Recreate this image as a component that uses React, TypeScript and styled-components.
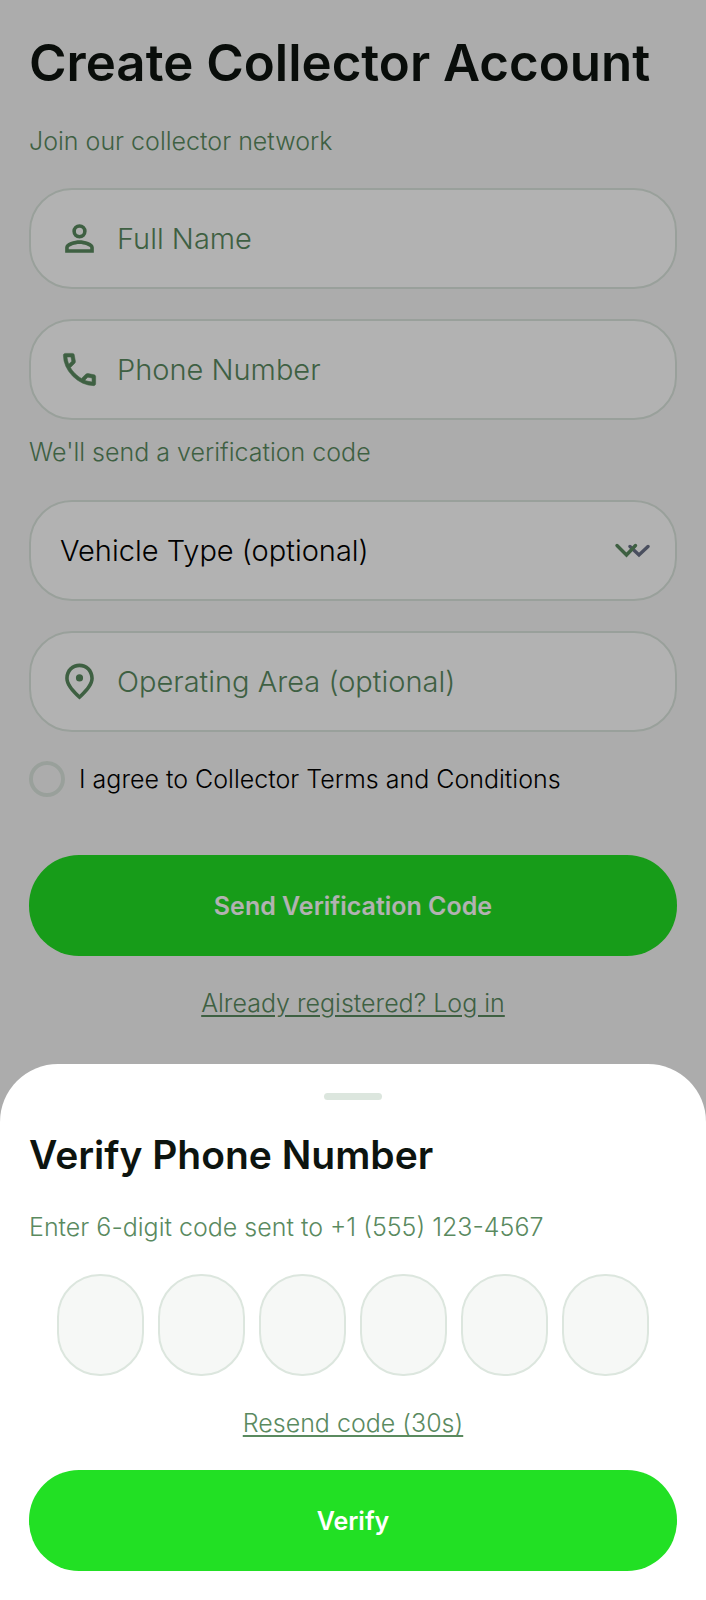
import React, { useState } from "react";
import styled, { createGlobalStyle } from "styled-components";

const color = {
  ink: "#0d140f",
  text: "#000000",
  muted: "#5a8a5f",
  line: "#dce6de",
  page: "#f7f7f7",
  tile: "#f6f8f6",
  brand: "#22e024",
};

const GlobalStyle = createGlobalStyle`
  *, *::before, *::after { box-sizing: border-box; }
  body { margin: 0; background: ${color.page}; }
  body, button, input, select { font-family: Inter, "Liberation Sans", sans-serif; }
`;

const Screen = styled.div`
  display: grid;
  min-height: 100vh;
`;

const Page = styled.main`
  grid-area: 1 / 1;
  padding: 29px;
  background: ${color.page};
`;

const Form = styled.form`
  display: flex;
  flex-direction: column;
`;

const Title = styled.h1`
  margin: 0;
  font-size: 51px;
  line-height: 68px;
  font-weight: 600;
  color: ${color.ink};
`;

const SheetTitle = styled.h2`
  margin: 0;
  font-size: 39px;
  line-height: 52px;
  font-weight: 600;
  color: ${color.ink};
`;

const Note = styled.p<{ $top: number; $bottom: number }>`
  margin: ${(p) => p.$top}px 0 ${(p) => p.$bottom}px;
  font-size: 25px;
  line-height: 36px;
  font-weight: 300;
  color: ${color.muted};
`;

const Field = styled.label`
  display: flex;
  align-items: center;
  gap: 16px;
  height: 101px;
  padding: 0 25px 0 27px;
  border: 2px solid ${color.line};
  border-radius: 43px;
  background: #fff;
  color: ${color.muted};

  & + & { margin-top: 30px; }
  svg { flex: none; }
`;

const TextInput = styled.input`
  flex: 1;
  min-width: 0;
  padding: 0;
  border: 0;
  outline: 0;
  background: transparent;
  font-size: 29px;
  line-height: 40px;
  font-weight: 300;
  color: ${color.text};
  &::placeholder { color: ${color.muted}; opacity: 1; }
`;

const Select = styled.select`
  flex: 1;
  min-width: 0;
  padding: 0 0 0 2px;
  border: 0;
  outline: 0;
  appearance: none;
  background: transparent;
  font-size: 29px;
  line-height: 40px;
  font-weight: 300;
  color: ${color.text};
`;

const Terms = styled.label`
  display: flex;
  align-items: center;
  gap: 14px;
  margin: 29px 0 58px;
  font-size: 25px;
  line-height: 36px;
  font-weight: 300;
  color: ${color.text};
`;

const Tick = styled.input`
  flex: none;
  width: 36px;
  height: 36px;
  margin: 0;
  appearance: none;
  border: 4px solid ${color.line};
  border-radius: 50%;
  &:checked { background: ${color.brand}; }
`;

const PrimaryButton = styled.button`
  width: 100%;
  height: 101px;
  padding: 0 29px;
  border: 0;
  border-radius: 50px;
  background: ${color.brand};
  color: #fff;
  font-size: 25px;
  line-height: 36px;
  font-weight: 600;
`;

const LinkRow = styled.div<{ $top: number; $bottom: number }>`
  display: flex;
  justify-content: center;
  margin: ${(p) => p.$top}px 0 ${(p) => p.$bottom}px;
`;

const TextLink = styled.a`
  font-size: 25px;
  line-height: 36px;
  font-weight: 300;
  color: ${color.muted};
  text-underline-offset: 3px;
`;

const Backdrop = styled.div`
  grid-area: 1 / 1;
  z-index: 1;
  display: flex;
  flex-direction: column;
  justify-content: flex-end;
  background: rgba(0, 0, 0, 0.3);
`;

const Sheet = styled.section`
  padding: 29px;
  border-radius: 58px 58px 0 0;
  background: #fff;
`;

const Handle = styled.div`
  width: 58px;
  height: 7px;
  margin: 0 auto 29px;
  border-radius: 4px;
  background: ${color.line};
`;

const CodeRow = styled.div`
  display: flex;
  justify-content: center;
  gap: 14px;
`;

const CodeBox = styled.input`
  width: 87px;
  min-width: 0;
  height: 102px;
  padding: 0;
  border: 2px solid ${color.line};
  border-radius: 43px;
  outline: 0;
  background: ${color.tile};
  font-size: 39px;
  text-align: center;
  color: ${color.ink};
`;

const PersonIcon = () => (
  <svg width="43" height="43" viewBox="0 0 24 24" fill="currentColor" fillRule="evenodd" aria-hidden="true">
    <path d="M12 4a4 4 0 1 0 0 8 4 4 0 0 0 0-8zm0 2a2 2 0 1 1 0 4 2 2 0 0 1 0-4z" />
    <path d="M12 13c-2.67 0-8 1.34-8 4v3h16v-3c0-2.66-5.33-4-8-4zm0 2c2.7 0 5.8 1.3 6 2v1H6v-1c.2-.7 3.3-2 6-2z" />
  </svg>
);

const PhoneIcon = () => (
  <svg width="43" height="43" viewBox="0 0 24 24" fill="currentColor" stroke="currentColor" strokeWidth="0.3" aria-hidden="true">
    <path d="M19.95 21q-3.125 0-6.175-1.362t-5.55-3.863-3.862-5.55T3 4.05q0-.45.3-.75t.75-.3H8.1q.35 0 .625.238t.325.562l.65 3.5q.05.4-.025.675T9.4 8.45L6.975 10.9q.5.925 1.187 1.787t1.513 1.663q.775.775 1.625 1.438T13.1 17l2.35-2.35q.225-.225.588-.337t.712-.063l3.45.7q.35.1.575.363T21 15.9v4.05q0 .45-.3.75t-.75.3M6.025 9l1.65-1.65L7.25 5H5.025q.125 1.025.35 2.025T6.025 9m8.95 8.95q.975.425 1.988.675T19 18.95v-2.2l-2.35-.475z" />
  </svg>
);

const PinIcon = () => (
  <svg width="43" height="43" viewBox="0 0 24 24" fill="currentColor" aria-hidden="true">
    <path d="M12 2c4.2 0 8 3.22 8 8.2 0 3.32-2.67 7.25-8 11.8-5.33-4.55-8-8.48-8-11.8C4 5.22 7.8 2 12 2zm6 8.2C18 6.57 15.35 4 12 4s-6 2.57-6 6.2c0 2.34 1.95 5.44 6 9.14 4.05-3.7 6-6.8 6-9.14z" />
    <circle cx="12" cy="10" r="2" />
  </svg>
);

const ChevronsIcon = () => (
  <svg width="36" height="16" viewBox="0 0 36 16" fill="none" strokeWidth="3.4" strokeLinecap="round" aria-hidden="true">
    <path d="M16 3.5l9 8.5 9-8.5" stroke="#6b7288" />
    <path d="M3 2.5l9.5 9.5 9-9.5" stroke={color.muted} />
  </svg>
);

const DIGITS = [1, 2, 3, 4, 5, 6];

export default function App() {
  const [code, setCode] = useState<string[]>(DIGITS.map(() => ""));
  const setDigit = (index: number, value: string) =>
    setCode(code.map((digit, i) => (i === index ? value : digit)));

  return (
    <>
      <GlobalStyle />
      <Screen>
        <Page>
          <Form onSubmit={(e) => e.preventDefault()}>
            <Title>Create Collector Account</Title>
            <Note $top={26} $bottom={29}>Join our collector network</Note>
            <Field>
              <PersonIcon />
              <TextInput type="text" placeholder="Full Name" aria-label="Full Name" />
            </Field>
            <Field>
              <PhoneIcon />
              <TextInput type="tel" placeholder="Phone Number" aria-label="Phone Number" />
            </Field>
            <Note $top={14} $bottom={30}>We'll send a verification code</Note>
            <Field>
              <Select aria-label="Vehicle Type" defaultValue="">
                <option value="">Vehicle Type (optional)</option>
              </Select>
              <ChevronsIcon />
            </Field>
            <Field>
              <PinIcon />
              <TextInput type="text" placeholder="Operating Area (optional)" aria-label="Operating Area" />
            </Field>
            <Terms>
              <Tick type="checkbox" />
              I agree to Collector Terms and Conditions
            </Terms>
            <PrimaryButton type="submit">Send Verification Code</PrimaryButton>
            <LinkRow $top={29} $bottom={0}>
              <TextLink href="#login">Already registered? Log in</TextLink>
            </LinkRow>
          </Form>
        </Page>
        <Backdrop>
          <Sheet role="dialog" aria-labelledby="verify-title">
            <Handle />
            <SheetTitle id="verify-title">Verify Phone Number</SheetTitle>
            <Note $top={28} $bottom={29}>Enter 6-digit code sent to +1 (555) 123-4567</Note>
            <CodeRow>
              {DIGITS.map((n, i) => (
                <CodeBox
                  key={n}
                  inputMode="numeric"
                  maxLength={1}
                  aria-label={`Digit ${n}`}
                  value={code[i]}
                  onChange={(e) => setDigit(i, e.target.value)}
                />
              ))}
            </CodeRow>
            <LinkRow $top={29} $bottom={29}>
              <TextLink href="#resend">Resend code (30s)</TextLink>
            </LinkRow>
            <PrimaryButton type="button">Verify</PrimaryButton>
          </Sheet>
        </Backdrop>
      </Screen>
    </>
  );
}
